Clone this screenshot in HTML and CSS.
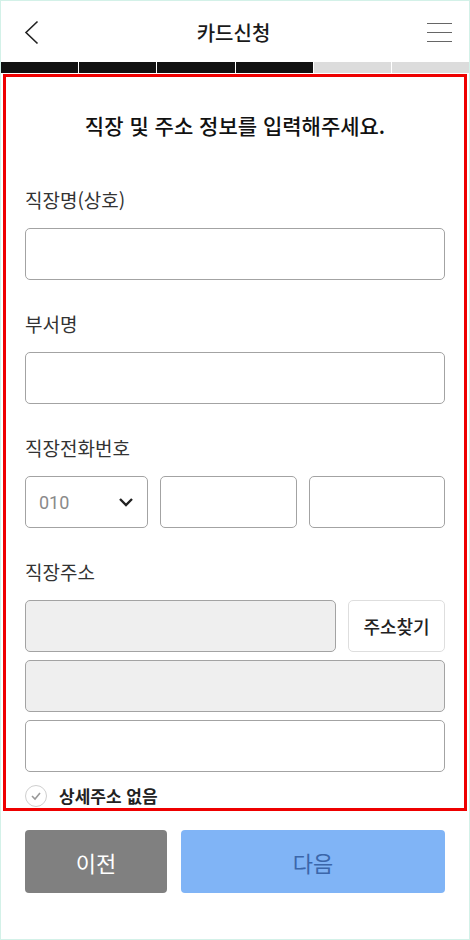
FILE: index.html
```html
<!DOCTYPE html>
<html lang="ko">
<head>
<meta charset="utf-8">
<title>카드신청</title>
<link rel="stylesheet" href="styles.css">
</head>
<body>
<div class="page">
  <header class="header">
    <button class="icon-btn back" aria-label="뒤로">
      <svg width="16" height="26" viewBox="0 0 16 26"><polyline points="13.5,1.5 2,12.5 13.5,23.5" fill="none" stroke="#222" stroke-width="1.6"/></svg>
    </button>
    <h1 class="header-title">카드신청</h1>
    <button class="icon-btn menu" aria-label="메뉴">
      <span class="bar"></span><span class="bar"></span><span class="bar"></span>
    </button>
  </header>
  <div class="progress">
    <span class="step done"></span><span class="step done"></span><span class="step done"></span><span class="step done"></span><span class="step"></span><span class="step"></span>
  </div>
  <main class="form-box">
    <h2 class="form-title">직장 및 주소 정보를 입력해주세요.</h2>
    <div class="field">
      <label class="label">직장명(상호)</label>
      <div class="input"></div>
    </div>
    <div class="field">
      <label class="label">부서명</label>
      <div class="input"></div>
    </div>
    <div class="field">
      <label class="label">직장전화번호</label>
      <div class="phone-row">
        <div class="input select">
          <span class="select-value">010</span>
          <svg width="16" height="10" viewBox="0 0 16 10"><polyline points="2,2 8,8 14,2" fill="none" stroke="#222" stroke-width="2.4"/></svg>
        </div>
        <div class="input"></div>
        <div class="input"></div>
      </div>
    </div>
    <div class="field">
      <label class="label">직장주소</label>
      <div class="addr">
        <div class="addr-row">
          <div class="input disabled grow"></div>
          <button class="find-btn">주소찾기</button>
        </div>
        <div class="input disabled"></div>
        <div class="input"></div>
      </div>
      <div class="check-row">
        <span class="check">
          <svg width="12" height="10" viewBox="0 0 12 10"><polyline points="2,5 5,8 10,2" fill="none" stroke="#999" stroke-width="1.6"/></svg>
        </span>
        <span class="check-label">상세주소 없음</span>
      </div>
    </div>
  </main>
  <div class="actions">
    <button class="btn prev">이전</button>
    <button class="btn next">다음</button>
  </div>
</div>
</body>
</html>
```
FILE: styles.css
```css
* { box-sizing: border-box; }
html, body { margin: 0; padding: 0; background: #fff; }
body { font-family: "Noto Sans CJK KR", "Noto Sans", sans-serif; color: #222; }
button { font-family: inherit; }

.page {
  width: 470px;
  height: 940px;
  border: 1px solid #d3f1e8;
  background: #fff;
  overflow: hidden;
}

.header {
  height: 61px;
  display: flex;
  align-items: center;
  justify-content: space-between;
  padding: 2px 17px 0 23px;
}
.icon-btn {
  background: none;
  border: 0;
  padding: 0;
  display: flex;
}
.back { width: 16px; height: 26px; }
.header-title {
  margin: 0;
  font-size: 20px;
  font-weight: 500;
  color: #1a1a1a;
}
.menu {
  width: 25px;
  height: 20px;
  flex-direction: column;
  justify-content: space-between;
}
.menu .bar {
  display: block;
  width: 25px;
  height: 1.8px;
  background: #666;
}

.progress {
  display: flex;
  gap: 1px;
  height: 11px;
}
.step { flex: 1; background: #dcdcdc; }
.step.done { background: #111; }

.form-box {
  margin: 1px 2px 0 2px;
  border: 3px solid #ee0000;
  padding: 34px 19px 1px 19px;
}
.form-title {
  margin: 0 0 48px;
  text-align: center;
  font-size: 21px;
  line-height: 28px;
  font-weight: 500;
  color: #111;
}

.field { margin-bottom: 31px; }
.field:last-child { margin-bottom: 0; }
.label {
  display: block;
  font-size: 19px;
  line-height: 26px;
  color: #333;
  margin-bottom: 15px;
}
.input {
  height: 52px;
  border: 1px solid #a3a3a3;
  border-radius: 5px;
  background: #fff;
}
.input.disabled { background: #efefef; }

.phone-row {
  display: grid;
  grid-template-columns: 123px 1fr 1fr;
  gap: 12px;
}
.select {
  display: flex;
  align-items: center;
  justify-content: space-between;
  padding: 0 13px;
}
.select-value {
  font-family: Roboto, "Noto Sans", sans-serif;
  font-size: 18px;
  color: #8a8a8a;
}

.addr { display: flex; flex-direction: column; gap: 8px; }
.addr-row { display: flex; gap: 12px; }
.grow { flex: 1; }
.find-btn {
  width: 97px;
  height: 52px;
  border: 1px solid #dedede;
  border-radius: 5px;
  background: #fff;
  font-size: 18px;
  font-weight: 500;
  color: #222;
}

.check-row {
  display: flex;
  align-items: center;
  gap: 12px;
  margin-top: 12px;
  height: 23px;
}
.check {
  width: 22px;
  height: 22px;
  border: 1px solid #cfcfcf;
  border-radius: 50%;
  display: flex;
  align-items: center;
  justify-content: center;
}
.check-label {
  font-size: 17px;
  font-weight: 700;
  color: #222;
}

.actions {
  display: flex;
  gap: 14px;
  padding: 19px 24px 0 24px;
}
.btn {
  height: 63px;
  border: 0;
  border-radius: 4px;
  font-size: 22px;
  font-weight: 400;
}
.prev { width: 142px; background: #808080; color: #fff; }
.next { flex: 1; background: #80b4f6; color: #3b66aa; }
```
